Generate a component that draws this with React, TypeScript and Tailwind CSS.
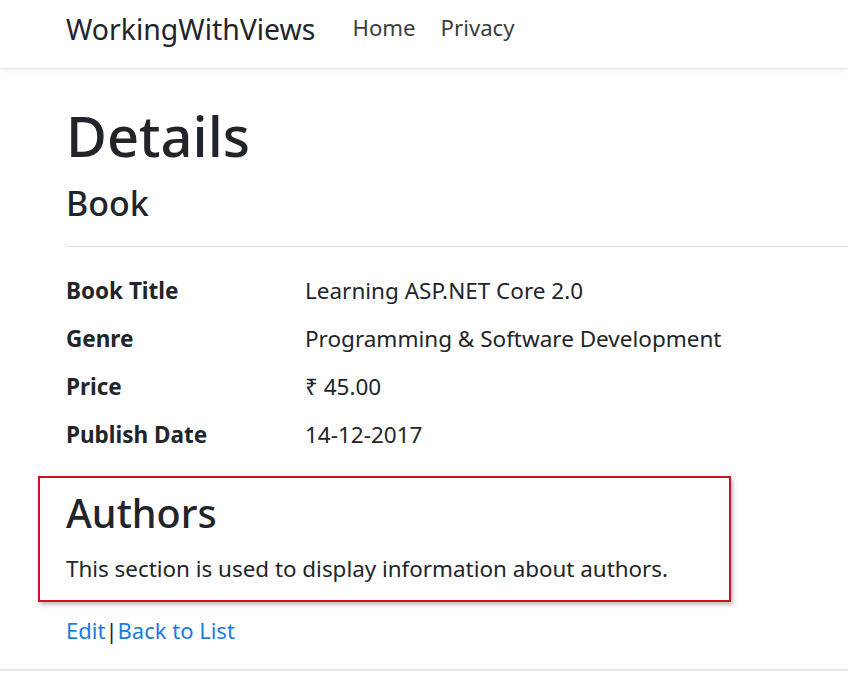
import React from "react";

const font = { fontFamily: '"Noto Sans", "Open Sans", sans-serif' };

export default function App() {
  const rows: [string, string][] = [
    ["Book Title", "Learning ASP.NET Core 2.0"],
    ["Genre", "Programming & Software Development"],
    ["Price", "₹ 45.00"],
    ["Publish Date", "14-12-2017"],
  ];
  return (
    <div className="min-h-[675px] bg-white text-[#212529]" style={font}>
      <nav className="h-[69px] border-b border-[#e5e5e5] shadow-[0_2px_6px_rgba(0,0,0,0.06)] flex items-start pl-[66px]">
        <span className="mt-[12px] text-[28.4px] leading-[34px] text-[#212529]">WorkingWithViews</span>
        <span className="mt-[12px] ml-[37px] text-[22.2px] leading-[32px] text-[#3d3d3d]">Home</span>
        <span className="mt-[12px] ml-[25px] text-[22.2px] leading-[32px] text-[#3d3d3d]">Privacy</span>
      </nav>
      <main className="pl-[66px]">
        <h1 className="text-[56px] font-medium leading-[1.2] mt-[33px]">Details</h1>
        <h4 className="text-[34px] font-medium leading-[1.2] mt-[14px]">Book</h4>
        <hr className="border-t border-[#e0e0e0] mt-[22px]" />
        <div className="mt-[28px]">
          {rows.map(([k, v]) => (
            <div key={k} className="flex h-[48px] items-start text-[22.5px] leading-[32px]">
              <div className="w-[239px] font-bold">{k}</div>
              <div>{v}</div>
            </div>
          ))}
        </div>
        <div className="ml-[-28px] mt-[9px] w-[693px] h-[126px] border-2 border-[#d40f1f] shadow-[2px_3px_4px_rgba(0,0,0,0.25)] pl-[26px] pt-[12px]">
          <h3 className="text-[39.5px] font-medium leading-[1.2]">Authors</h3>
          <p className="text-[22.4px] leading-[32px] mt-[16px]">This section is used to display information about authors.</p>
        </div>
        <div className="mt-[12px] flex text-[22px] leading-[32px]">
          <a className="text-[#1b7be0]">Edit</a>
          <span className="tracking-[-6px]">|</span>
          <a className="ml-[6px] text-[#1b7be0]">Back to List</a>
        </div>
      </main>
      <div className="mt-[23px] border-t-2 border-[#e5e5e5]" />
    </div>
  );
}
